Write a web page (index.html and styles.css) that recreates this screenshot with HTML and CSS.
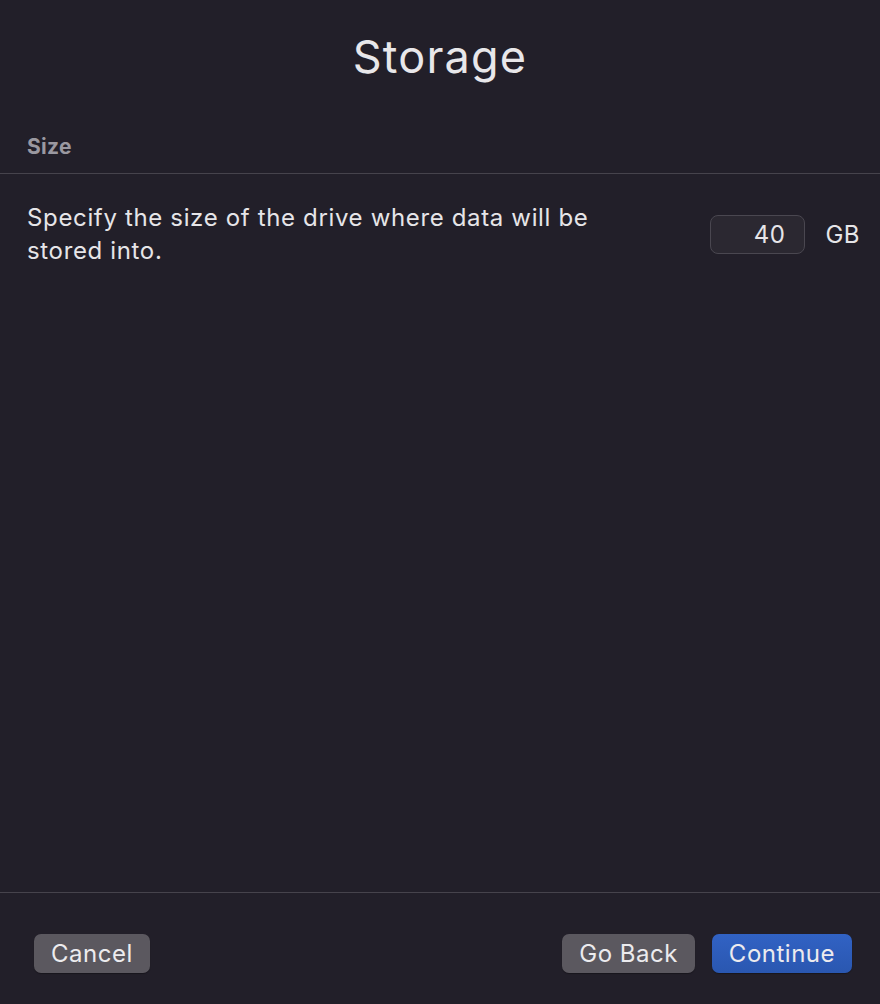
FILE: index.html
```html
<!DOCTYPE html>
<html>
<head>
<meta charset="utf-8">
<link rel="stylesheet" href="styles.css">
</head>
<body>
<div class="window">
  <h1 class="title">Storage</h1>
  <div class="section-head">Size</div>
  <div class="content">
    <div class="row">
      <p class="desc">Specify the size of the drive where data will be stored into.</p>
      <div class="field">
        <div class="input">40</div>
        <span class="unit">GB</span>
      </div>
    </div>
  </div>
  <div class="footer">
    <button class="btn">Cancel</button>
    <div class="right">
      <button class="btn">Go Back</button>
      <button class="btn primary">Continue</button>
    </div>
  </div>
</div>
</body>
</html>
```
FILE: styles.css
```css
html, body {
  margin: 0;
  padding: 0;
  background: #221f29;
}
body {
  font-family: Inter, "Noto Sans", sans-serif;
  color: #e6e5e8;
}
.window {
  width: 880px;
  height: 1004px;
  display: flex;
  flex-direction: column;
  box-sizing: border-box;
}
.title {
  margin: 0;
  padding-top: 26px;
  height: 62px;
  text-align: center;
  font-size: 45px;
  font-weight: 400;
  letter-spacing: 1.2px;
  line-height: 62px;
  color: #e8e7ea;
}
.section-head {
  margin-top: 34px;
  padding: 0 27px;
  height: 52px;
  line-height: 50px;
  font-size: 21px;
  font-weight: 700;
  letter-spacing: 0.3px;
  color: #9a98a0;
  border-bottom: 1px solid #46434c;
  box-sizing: border-box;
}
.content {
  flex: 1;
  padding: 27px 20px 0 27px;
  border-bottom: 1px solid #46434c;
}
.row {
  display: flex;
  justify-content: space-between;
  align-items: flex-start;
}
.desc {
  margin: 0;
  width: 600px;
  font-size: 24px;
  letter-spacing: 0.65px;
  line-height: 33px;
  color: #e6e5e8;
}
.field {
  display: flex;
  align-items: center;
  gap: 20px;
  margin-top: 14px;
}
.input {
  width: 95px;
  height: 39px;
  box-sizing: border-box;
  border: 1px solid #4a4750;
  border-radius: 8px;
  background: #2b2831;
  text-align: right;
  padding-right: 19px;
  font-size: 24px;
  letter-spacing: 0.5px;
  line-height: 37px;
  color: #e6e5e8;
}
.unit {
  font-size: 24px;
  letter-spacing: 0.5px;
  color: #e6e5e8;
}
.footer {
  height: 111px;
  padding: 41px 28px 0 34px;
  box-sizing: border-box;
  display: flex;
  justify-content: space-between;
  align-items: flex-start;
}
.right {
  display: flex;
  gap: 17px;
}
.btn {
  font-family: Inter, "Noto Sans", sans-serif;
  height: 39px;
  padding: 0 17px;
  border: none;
  border-radius: 7px;
  background: #5b585f;
  color: #ecebee;
  font-size: 24px;
  letter-spacing: 0.5px;
  line-height: 39px;
  box-shadow: 0 1px 1px rgba(0,0,0,0.3);
}
.btn.primary {
  background: linear-gradient(#3162c4, #2a57b0);
}
```
